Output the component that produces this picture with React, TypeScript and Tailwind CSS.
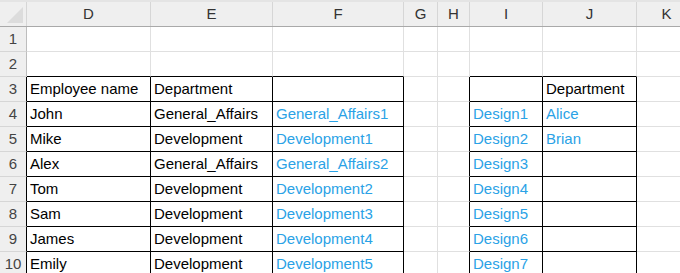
const cols = ["D", "E", "F", "G", "H", "I", "J", "K"]
const widths = [124, 122, 131, 34, 32, 73, 94, 60]

type Cell = { text?: string; blue?: boolean }

const rows: Cell[][] = [
  [],
  [],
  [{ text: "Employee name" }, { text: "Department" }, {}, {}, {}, {}, { text: "Department" }],
  [{ text: "John" }, { text: "General_Affairs" }, { text: "General_Affairs1", blue: true }, {}, {}, { text: "Design1", blue: true }, { text: "Alice", blue: true }],
  [{ text: "Mike" }, { text: "Development" }, { text: "Development1", blue: true }, {}, {}, { text: "Design2", blue: true }, { text: "Brian", blue: true }],
  [{ text: "Alex" }, { text: "General_Affairs" }, { text: "General_Affairs2", blue: true }, {}, {}, { text: "Design3", blue: true }],
  [{ text: "Tom" }, { text: "Development" }, { text: "Development2", blue: true }, {}, {}, { text: "Design4", blue: true }],
  [{ text: "Sam" }, { text: "Development" }, { text: "Development3", blue: true }, {}, {}, { text: "Design5", blue: true }],
  [{ text: "James" }, { text: "Development" }, { text: "Development4", blue: true }, {}, {}, { text: "Design6", blue: true }],
  [{ text: "Emily" }, { text: "Development" }, { text: "Development5", blue: true }, {}, {}, { text: "Design7", blue: true }],
]

// bordered ranges: D3:F10 and I3:J10
const inTable = (r: number, c: number) =>
  r >= 3 && r <= 10 && ((c >= 0 && c <= 2) || c === 5 || c === 6)

const font = { fontFamily: '"Liberation Sans", Arial, sans-serif' }

export default function App() {
  return (
    <div className="w-[680px] h-[273px] overflow-hidden bg-white text-[15px]" style={font}>
      {/* column header strip */}
      <div className="flex h-[27px] bg-[#efefef] border-t-2 border-t-[#e4e4e4] border-b border-b-[#a9a9a9]">
        <div className="w-[27px] shrink-0 relative border-r border-[#d6d6d6]">
          <div className="absolute left-[7px] top-[5px] w-0 h-0 border-l-[16px] border-l-transparent border-b-[16px] border-b-[#dcdcdc]" />
        </div>
        {cols.map((c, i) => (
          <div
            key={c}
            style={{ width: widths[i] }}
            className="shrink-0 flex items-center justify-center text-[#333] border-r border-[#d6d6d6]"
          >
            {c}
          </div>
        ))}
      </div>

      {rows.map((row, ri) => {
        const r = ri + 1
        return (
          <div key={r} className="flex h-[25px]">
            <div
              className={
                "w-[27px] shrink-0 flex items-center justify-center bg-[#efefef] text-[#444] border-b border-b-[#d6d6d6] border-r " +
                (inTable(r, 0) ? "border-r-black" : "border-r-[#bdbdbd]")
              }
            >
              {r}
            </div>
            {cols.map((c, ci) => {
              const cell = row[ci] || {}
              const right = inTable(r, ci) || inTable(r, ci + 1)
              const bottom = inTable(r, ci) || inTable(r + 1, ci)
              return (
                <div
                  key={c}
                  style={{ width: widths[ci] }}
                  className={
                    "shrink-0 flex items-center pl-[3px] whitespace-nowrap overflow-hidden border-r border-b " +
                    (right ? "border-r-black " : "border-r-[#e0e0e0] ") +
                    (bottom ? "border-b-black " : "border-b-[#e0e0e0] ") +
                    (cell.blue ? "text-[#2aa2e6]" : "text-black")
                  }
                >
                  {cell.text}
                </div>
              )
            })}
          </div>
        )
      })}
    </div>
  )
}
